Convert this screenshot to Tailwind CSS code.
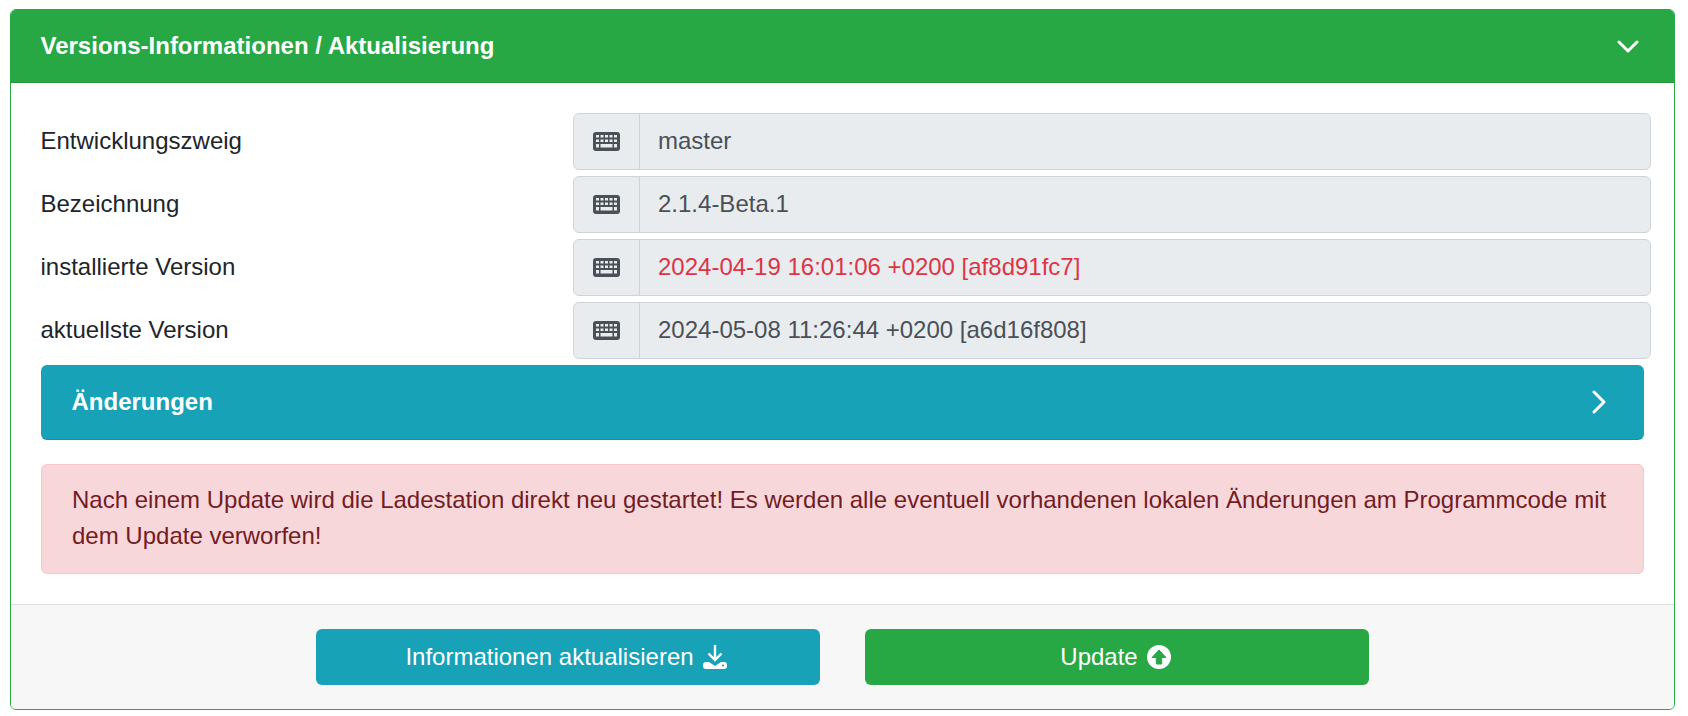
<!DOCTYPE html>
<html lang="de">
<head>
<meta charset="utf-8">
<script src="https://cdn.jsdelivr.net/npm/@tailwindcss/browser@4"></script>
</head>
<body class="bg-white font-['Liberation_Sans',Arial,sans-serif] text-[24px] leading-[36px] text-[#212529]">
<div class="pt-[9px] pl-[10px] pr-[13px] pb-[6px]">
  <section class="rounded-[6px] border-[1.5px] border-[#28a745] overflow-hidden">
    <header class="h-[72.5px] bg-[#28a745] border-b-[1.5px] border-black/10 pl-[29.5px] pr-[34px] flex items-center justify-between text-white font-bold">
      <span>Versions-Informationen / Aktualisierung</span>
      <svg class="w-[24px] h-[14px] translate-y-[1px]" viewBox="0 0 24 14" fill="none" stroke="#fff" stroke-width="3" stroke-linecap="round" stroke-linejoin="round"><path d="M3 2l9 9 9-9"/></svg>
    </header>
    <div class="pt-[30px] pl-[29.5px] pr-[23.5px] pb-[30px]">
      <div class="flex flex-col gap-[6px]">
        <div class="flex items-center">
          <label class="w-[532px] shrink-0">Entwicklungszweig</label>
          <div class="flex-1 h-[57px] flex rounded-[6px] border-[1.5px] border-[#ced4da] bg-[#e9ecef] text-[#495057]">
            <span class="w-[66px] shrink-0 border-r-[1.5px] border-[#ced4da] flex items-center justify-center">
              <svg class="w-[27px] h-[19px]" viewBox="0 0 27 19"><rect width="27" height="19" rx="3" fill="#495057"/><g fill="#e9ecef"><rect x="3" y="3" width="3" height="2.5"/><rect x="7.500" y="3" width="3" height="2.500"/><rect x="12" y="3" width="3" height="2.500"/><rect x="16.500" y="3" width="3" height="2.500"/><rect x="21" y="3" width="3" height="2.500"/><rect x="3" y="7.500" width="3" height="2.500"/><rect x="7.500" y="7.500" width="3" height="2.500"/><rect x="12" y="7.500" width="3" height="2.500"/><rect x="16.500" y="7.500" width="3" height="2.500"/><rect x="21" y="7.500" width="3" height="2.500"/><rect x="3" y="12" width="3" height="3.500"/><rect x="7.500" y="12" width="12" height="3.500"/><rect x="21" y="12" width="3" height="3.500"/></g></svg>
            </span>
            <span class="pl-[18.5px] flex items-center">master</span>
          </div>
        </div>
        <div class="flex items-center">
          <label class="w-[532px] shrink-0">Bezeichnung</label>
          <div class="flex-1 h-[57px] flex rounded-[6px] border-[1.5px] border-[#ced4da] bg-[#e9ecef] text-[#495057]">
            <span class="w-[66px] shrink-0 border-r-[1.5px] border-[#ced4da] flex items-center justify-center">
              <svg class="w-[27px] h-[19px]" viewBox="0 0 27 19"><rect width="27" height="19" rx="3" fill="#495057"/><g fill="#e9ecef"><rect x="3" y="3" width="3" height="2.500"/><rect x="7.500" y="3" width="3" height="2.500"/><rect x="12" y="3" width="3" height="2.500"/><rect x="16.500" y="3" width="3" height="2.500"/><rect x="21" y="3" width="3" height="2.500"/><rect x="3" y="7.500" width="3" height="2.500"/><rect x="7.500" y="7.500" width="3" height="2.500"/><rect x="12" y="7.500" width="3" height="2.500"/><rect x="16.500" y="7.500" width="3" height="2.500"/><rect x="21" y="7.500" width="3" height="2.500"/><rect x="3" y="12" width="3" height="3.500"/><rect x="7.500" y="12" width="12" height="3.500"/><rect x="21" y="12" width="3" height="3.500"/></g></svg>
            </span>
            <span class="pl-[18.5px] flex items-center">2.1.4-Beta.1</span>
          </div>
        </div>
        <div class="flex items-center">
          <label class="w-[532px] shrink-0">installierte Version</label>
          <div class="flex-1 h-[57px] flex rounded-[6px] border-[1.5px] border-[#ced4da] bg-[#e9ecef] text-[#495057]">
            <span class="w-[66px] shrink-0 border-r-[1.5px] border-[#ced4da] flex items-center justify-center">
              <svg class="w-[27px] h-[19px]" viewBox="0 0 27 19"><rect width="27" height="19" rx="3" fill="#495057"/><g fill="#e9ecef"><rect x="3" y="3" width="3" height="2.500"/><rect x="7.500" y="3" width="3" height="2.500"/><rect x="12" y="3" width="3" height="2.500"/><rect x="16.500" y="3" width="3" height="2.500"/><rect x="21" y="3" width="3" height="2.500"/><rect x="3" y="7.500" width="3" height="2.500"/><rect x="7.500" y="7.500" width="3" height="2.500"/><rect x="12" y="7.500" width="3" height="2.500"/><rect x="16.500" y="7.500" width="3" height="2.500"/><rect x="21" y="7.500" width="3" height="2.500"/><rect x="3" y="12" width="3" height="3.500"/><rect x="7.500" y="12" width="12" height="3.500"/><rect x="21" y="12" width="3" height="3.500"/></g></svg>
            </span>
            <span class="pl-[18.5px] flex items-center text-[#dc3545]">2024-04-19 16:01:06 +0200 [af8d91fc7]</span>
          </div>
        </div>
        <div class="flex items-center">
          <label class="w-[532px] shrink-0">aktuellste Version</label>
          <div class="flex-1 h-[57px] flex rounded-[6px] border-[1.5px] border-[#ced4da] bg-[#e9ecef] text-[#495057]">
            <span class="w-[66px] shrink-0 border-r-[1.5px] border-[#ced4da] flex items-center justify-center">
              <svg class="w-[27px] h-[19px]" viewBox="0 0 27 19"><rect width="27" height="19" rx="3" fill="#495057"/><g fill="#e9ecef"><rect x="3" y="3" width="3" height="2.500"/><rect x="7.500" y="3" width="3" height="2.500"/><rect x="12" y="3" width="3" height="2.500"/><rect x="16.500" y="3" width="3" height="2.500"/><rect x="21" y="3" width="3" height="2.500"/><rect x="3" y="7.500" width="3" height="2.500"/><rect x="7.500" y="7.500" width="3" height="2.500"/><rect x="12" y="7.500" width="3" height="2.500"/><rect x="16.500" y="7.500" width="3" height="2.500"/><rect x="21" y="7.500" width="3" height="2.500"/><rect x="3" y="12" width="3" height="3.500"/><rect x="7.500" y="12" width="12" height="3.500"/><rect x="21" y="12" width="3" height="3.500"/></g></svg>
            </span>
            <span class="pl-[18.5px] flex items-center">2024-05-08 11:26:44 +0200 [a6d16f808]</span>
          </div>
        </div>
      </div>
      <div class="mt-[6px] mr-[7px] h-[75px] rounded-[6px] bg-[#17a2b8] border-b-[1.5px] border-black/10 pl-[31px] pr-[37px] flex items-center justify-between text-white font-bold">
        <span>Änderungen</span>
        <svg class="w-[16px] h-[24px]" viewBox="0 0 16 24" fill="none" stroke="#fff" stroke-width="3" stroke-linecap="round" stroke-linejoin="round"><path d="M3 2l10 10L3 22"/></svg>
      </div>
      <div class="mt-[24px] mr-[7px] h-[110px] rounded-[6px] border-[1.5px] border-[#f5c6cb] bg-[#f8d7da] text-[#721c24] pl-[30.5px] pr-[30px] pt-[17.5px]">
        Nach einem Update wird die Ladestation direkt neu gestartet! Es werden alle eventuell vorhandenen lokalen Änderungen am Programmcode mit dem Update verworfen!
      </div>
    </div>
    <footer class="h-[105px] bg-[#f7f7f7] border-t-[1.5px] border-black/10 flex justify-center gap-[45px] pt-[24px] text-white">
      <button class="w-[504px] h-[56px] rounded-[6px] bg-[#17a2b8] pr-[4px] flex items-center justify-center gap-[9px]">
        Informationen aktualisieren
        <svg class="w-[24px] h-[24px]" viewBox="0 0 24 24"><path fill="none" stroke="#fff" stroke-width="2.400" d="M12 0v14M5.500 8.500l6.500 6.500 6.500-6.500"/><path fill="#fff" d="M3 17h3l6 4 6-4h3a3 3 0 0 1 3 3v1a3 3 0 0 1-3 3H3a3 3 0 0 1-3-3v-1a3 3 0 0 1 3-3z"/><circle cx="20" cy="20.500" r="1.100" fill="#17a2b8"/></svg>
      </button>
      <button class="w-[504px] h-[56px] rounded-[6px] bg-[#28a745] pr-[3px] flex items-center justify-center gap-[9px]">
        Update
        <svg class="w-[24px] h-[24px]" viewBox="0 0 24 24"><circle cx="12" cy="12" r="12" fill="#fff"/><path fill="#28a745" stroke="#28a745" stroke-width="1" stroke-linejoin="round" d="M12 5L19 12.500H14.700V19H9.300V12.500H5z"/></svg>
      </button>
    </footer>
  </section>
</div>
</body>
</html>
